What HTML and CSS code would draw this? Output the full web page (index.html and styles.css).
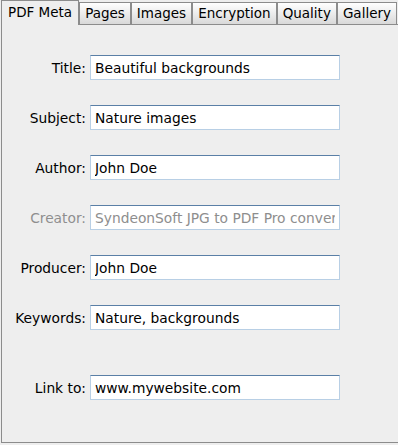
FILE: index.html
```html
<!DOCTYPE html>
<html>
<head>
    <title>PDF Meta</title>
    <link rel="stylesheet" href="styles.css">
</head>
<body>
    <div class="window">
        <div class="tabs">
            <div class="tab selected">PDF Meta</div>
            <div class="tab">Pages</div>
            <div class="tab">Images</div>
            <div class="tab">Encryption</div>
            <div class="tab">Quality</div>
            <div class="tab">Gallery</div>
        </div>

        <div class="panel">
            <div class="form">
                <label for="title">Title:</label>
                <input type="text" id="title" value="Beautiful backgrounds">

                <label for="subject">Subject:</label>
                <input type="text" id="subject" value="Nature images">

                <label for="author">Author:</label>
                <input type="text" id="author" value="John Doe">

                <label for="creator" class="disabled">Creator:</label>
                <input type="text" id="creator" value="SyndeonSoft JPG to PDF Pro converter" disabled>

                <label for="producer">Producer:</label>
                <input type="text" id="producer" value="John Doe">

                <label for="keywords">Keywords:</label>
                <input type="text" id="keywords" value="Nature, backgrounds">

                <label for="link" class="spaced">Link to:</label>
                <input type="text" id="link" class="spaced" value="www.mywebsite.com">
            </div>
        </div>
    </div>
</body>
</html>
```

FILE: styles.css
```css
html, body {
    margin: 0;
    padding: 0;
    background: #eeeeee;
}

body {
    font-family: "DejaVu Sans", sans-serif;
    font-size: 13.8px;
    color: #000;
}

.window {
    padding-left: 1px;
    height: 445px;
    box-sizing: border-box;
}

.tabs {
    display: flex;
    align-items: flex-end;
    height: 24px;
    font-size: 13.5px;
}

.tab {
    height: 21px;
    line-height: 20px;
    padding: 0 5px;
    border: 1px solid #8c8c8c;
    border-bottom: none;
    background: linear-gradient(#ffffff, #d9d9d9);
    white-space: nowrap;
}

.tab.selected {
    position: relative;
    z-index: 1;
    height: 24px;
    line-height: 23px;
    padding: 0 6px;
    background: #eeeeee;
    margin-bottom: -1px;
}

.panel {
    height: 419px;
    box-sizing: border-box;
    border-top: 1px solid #8c8c8c;
    border-left: 1px solid #8c8c8c;
    border-bottom: 1px solid #8c8c8c;
    padding-top: 30px;
}

.form {
    display: grid;
    grid-template-columns: 84px 250px;
    column-gap: 4px;
    row-gap: 25px;
    align-items: center;
}

label {
    text-align: right;
    white-space: nowrap;
}

label.disabled {
    color: #8e8e8e;
}

input {
    box-sizing: border-box;
    width: 250px;
    height: 25px;
    margin: 0;
    padding: 0 4px;
    font-family: "DejaVu Sans", sans-serif;
    font-size: 13.8px;
    color: #000;
    background: #fff;
    border: 1px solid #b8cfe5;
    border-top-color: #5a7fa6;
    outline: none;
}

input:disabled {
    color: #8e8e8e;
    background: #fff;
}

.spaced {
    margin-top: 20px;
}
```
